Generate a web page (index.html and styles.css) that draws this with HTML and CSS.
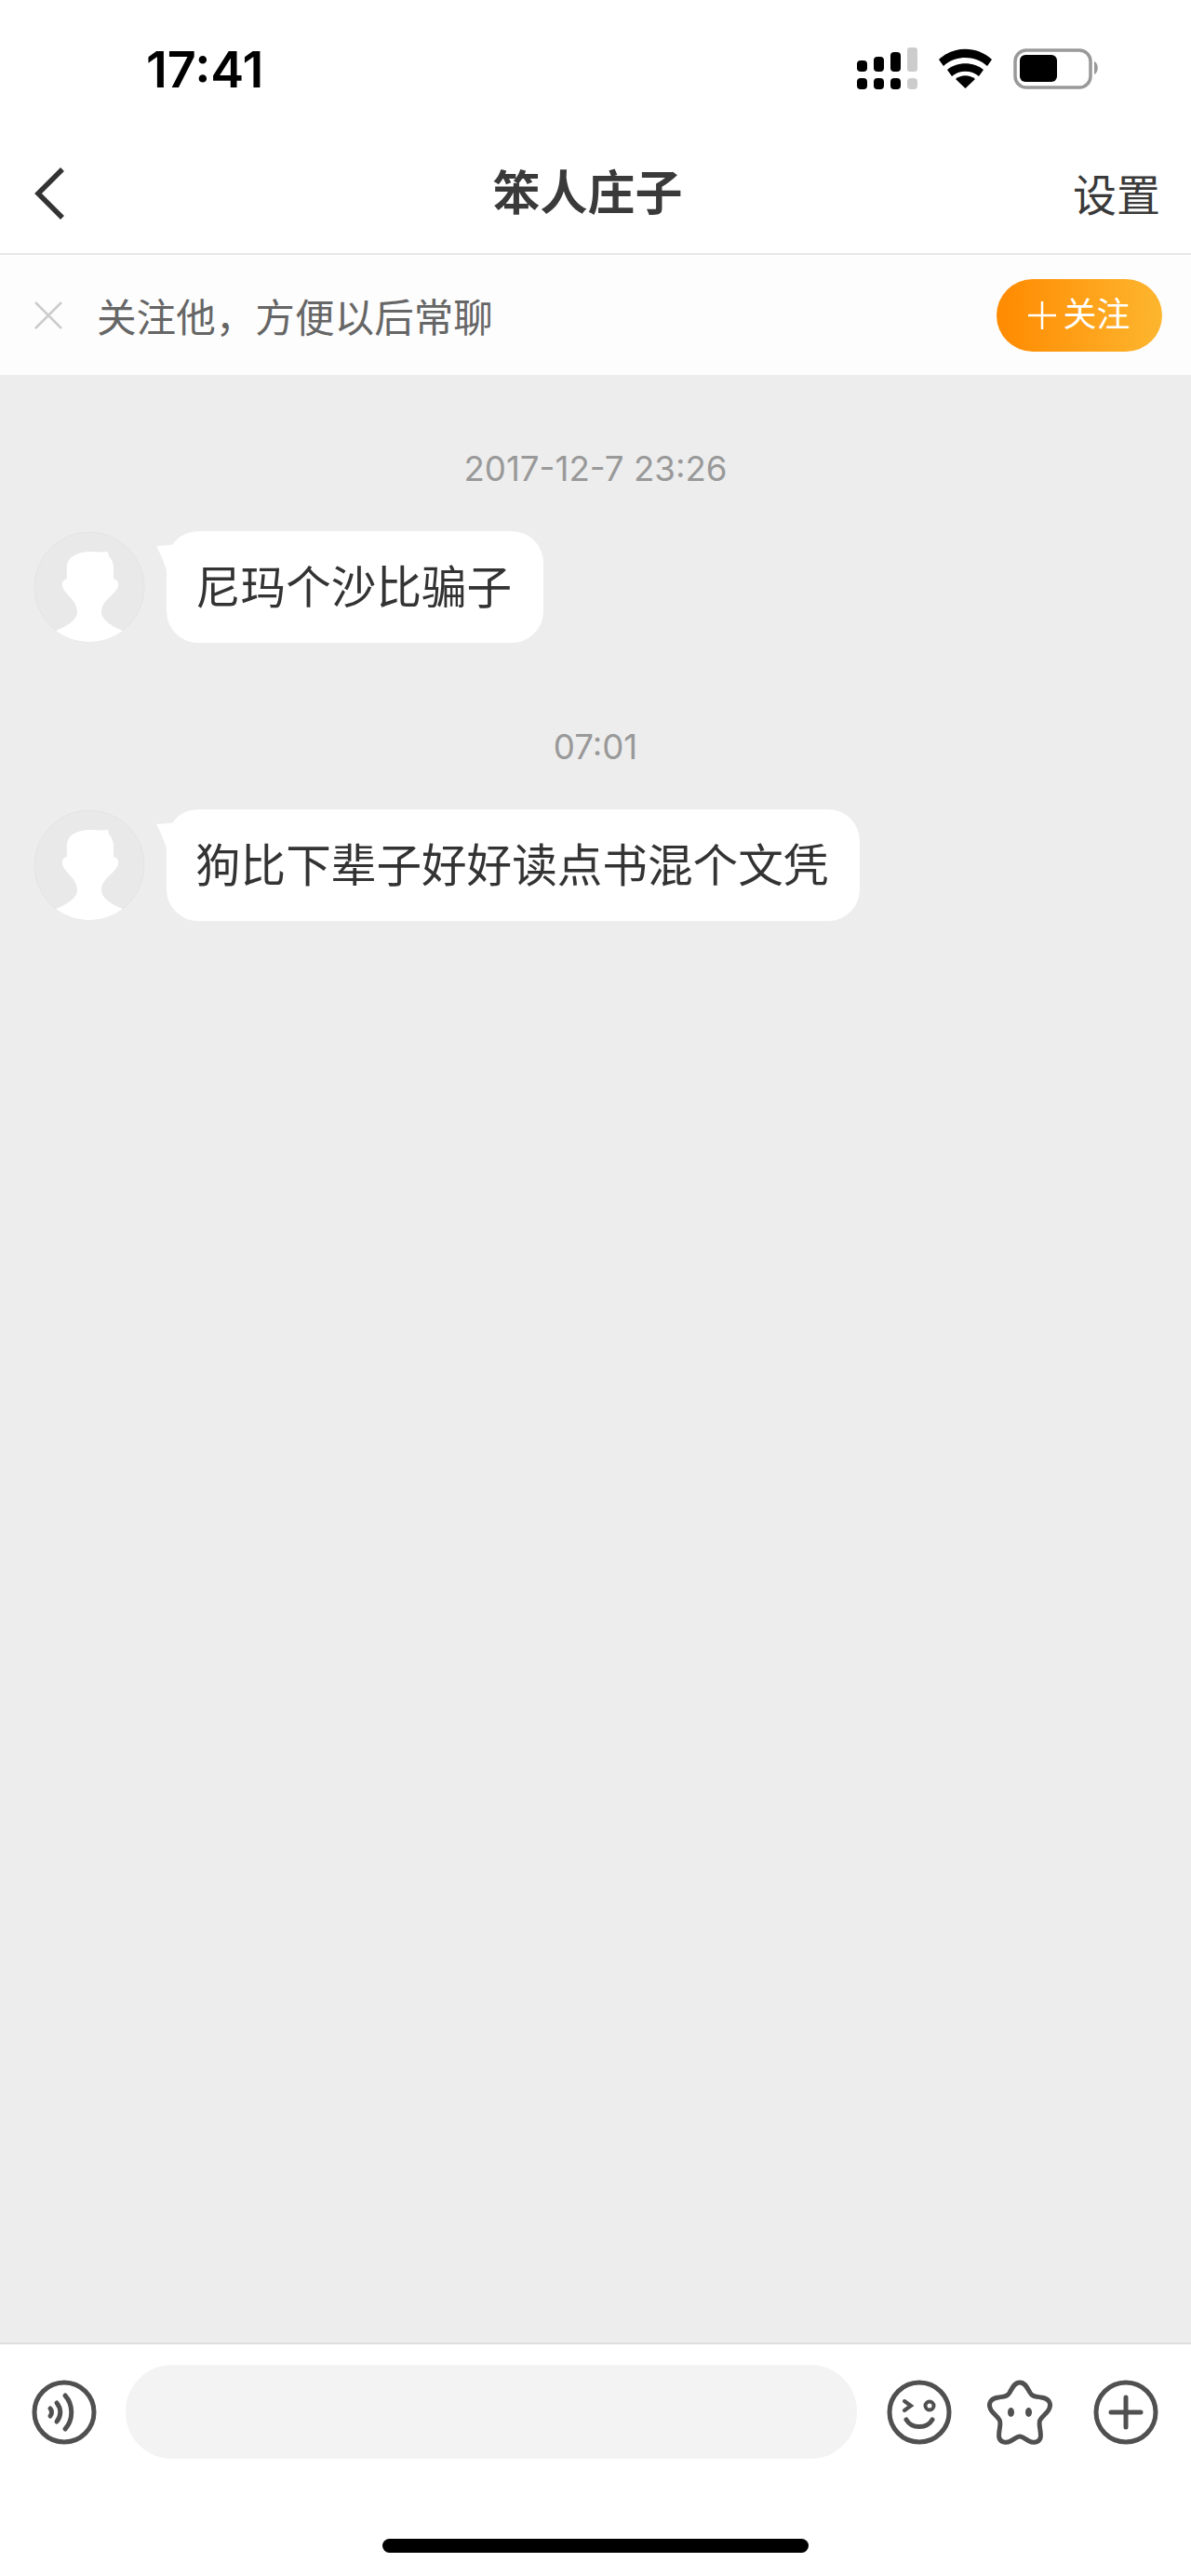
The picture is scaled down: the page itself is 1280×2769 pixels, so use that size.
FILE: index.html
```html
<!DOCTYPE html>
<html lang="zh-CN">
<head>
<meta charset="utf-8">
<title>笨人庄子</title>
<link rel="stylesheet" href="styles.css">
</head>
<body>
<div class="page">
  <header class="status">
    <span class="clock">17:41</span>
    <svg class="status-icons" width="262" height="46" viewBox="0 0 262 46">
      <g fill="#000">
        <rect x="0" y="14" width="11" height="12" rx="4"/><rect x="18" y="10" width="11" height="16" rx="4"/><rect x="36" y="5" width="11" height="21" rx="4"/>
        <rect x="0" y="33" width="11" height="12" rx="4"/><rect x="18" y="33" width="11" height="12" rx="4"/><rect x="36" y="33" width="11" height="12" rx="4"/>
      </g>
      <g fill="#ccc"><rect x="54" y="0" width="11" height="26" rx="3"/><rect x="54" y="33" width="11" height="12" rx="4"/></g>
      <g fill="#000">
        <path d="M88 13 C104 -2 129 -2 145 13 L140 20 C127 8 106 8 93 20Z"/>
        <path d="M97 24 C107 15 126 15 136 24 L131 31 C123 24 110 24 102 31Z"/>
        <path d="M106 34 C112 29 121 29 127 34 L116.500 44Z"/>
      </g>
      <rect x="170" y="3" width="81" height="40" rx="12" fill="none" stroke="#999" stroke-width="3.500"/>
      <rect x="175" y="8" width="40" height="29" rx="6" fill="#000"/>
      <path d="M255 15 C260 17 260 27 255 29Z" fill="#999"/>
    </svg>
  </header>
  <nav class="nav">
    <svg class="back" width="34" height="58" viewBox="0 0 34 58"><path d="M31 3 L5 29 L31 55" fill="none" stroke="#333" stroke-width="5.500"/></svg>
    <h1 class="title">笨人庄子</h1>
    <span class="settings">设置</span>
  </nav>
  <section class="follow">
    <svg class="close" width="30" height="30" viewBox="0 0 30 30"><path d="M1 1 L29 29 M29 1 L1 29" stroke="#ccc" stroke-width="2.500"/></svg>
    <span class="follow-text">关注他，方便以后常聊</span>
    <span class="follow-btn"><svg width="30" height="30" viewBox="0 0 30 30"><path d="M0 15 H30 M15 0 V30" stroke="#fff" stroke-width="2.500"/></svg><span class="follow-label">关注</span></span>
  </section>
  <main class="chat">
    <div class="stamp">2017-12-7 23:26</div>
    <div class="msg">
      <svg class="avatar" width="120" height="120" viewBox="0 0 120 120">
        <circle cx="60" cy="60" r="59" fill="#e9e9e9" stroke="#e4e4e4"/>
        <path d="M60 22 C67 22 74 23 80 22 L81 27 C84 30 86 34 86 40 C86 44 86 48 86 51 C90 52 92 55 91 59 C89 68 73 74 73 87 C73 96 86 103 96 107 A59 59 0 0 1 24 107 C34 103 47 96 47 87 C47 74 33 68 31 59 C30 55 32 52 36 51 C36 45 35 38 37 33 C40 26 50 22 60 22Z" fill="#fff"/>
      </svg>
      <p class="bubble">尼玛个沙比骗子</p>
    </div>
    <div class="stamp stamp-next">07:01</div>
    <div class="msg">
      <svg class="avatar" width="120" height="120" viewBox="0 0 120 120">
        <circle cx="60" cy="60" r="59" fill="#e9e9e9" stroke="#e4e4e4"/>
        <path d="M60 22 C67 22 74 23 80 22 L81 27 C84 30 86 34 86 40 C86 44 86 48 86 51 C90 52 92 55 91 59 C89 68 73 74 73 87 C73 96 86 103 96 107 A59 59 0 0 1 24 107 C34 103 47 96 47 87 C47 74 33 68 31 59 C30 55 32 52 36 51 C36 45 35 38 37 33 C40 26 50 22 60 22Z" fill="#fff"/>
      </svg>
      <p class="bubble">狗比下辈子好好读点书混个文凭</p>
    </div>
  </main>
  <footer class="composer">
    <div class="composer-row">
      <svg class="tool" width="70" height="70" viewBox="0 0 70 70" fill="none" stroke="#505050" stroke-width="5" stroke-linecap="round">
        <circle cx="35" cy="35" r="32"/>
        <path d="M20 31 C22 33 22 37 20 39"/>
        <path d="M27 25 C32 31 32 39 27 45"/>
        <path d="M36 17 C45 27 45 43 36 53"/>
      </svg>
      <div class="input"></div>
      <svg class="tool" width="70" height="70" viewBox="0 0 70 70" fill="none" stroke="#505050" stroke-width="5" stroke-linecap="round">
        <circle cx="35" cy="35" r="32"/>
        <path d="M19 23 L26 28 L19 33" stroke-width="4"/>
        <circle cx="46" cy="28" r="4.500" stroke-width="4"/>
        <path d="M21 43 C27 53 43 53 49 43"/>
      </svg>
      <svg class="tool tool-star" width="70" height="70" viewBox="0 0 70 70" fill="none" stroke="#505050" stroke-width="5" stroke-linejoin="round">
        <path d="M35 3 C41 3 43 9 46 14 C48 18 52 18 58 19 C65 20 69 24 67 30 C66 35 60 38 57 43 C54 47 59 57 57 63 C55 68 49 68 45 66 C41 64 38 61 35 61 C32 61 29 64 25 66 C21 68 15 68 13 63 C11 57 16 47 13 43 C10 38 4 35 3 30 C1 24 5 20 12 19 C18 18 22 18 24 14 C27 9 29 3 35 3Z"/>
        <ellipse cx="25.500" cy="35" rx="3.500" ry="5" fill="#505050" stroke="none"/>
        <ellipse cx="44.500" cy="35" rx="3.500" ry="5" fill="#505050" stroke="none"/>
      </svg>
      <svg class="tool tool-plus" width="70" height="70" viewBox="0 0 70 70" fill="none" stroke="#505050" stroke-width="5" stroke-linecap="round">
        <circle cx="35" cy="35" r="32"/>
        <path d="M19 35 H51 M35 19 V51"/>
      </svg>
    </div>
    <div class="home-bar"></div>
  </footer>
</div>
</body>
</html>
```
FILE: styles.css
```css
* { box-sizing: border-box; }
html, body { margin: 0; padding: 0; }
body {
  background: #fff;
  font-family: "Noto Sans CJK SC", "Noto Sans", sans-serif;
  color: #333;
}
.page {
  width: 1280px;
  height: 2769px;
  display: flex;
  flex-direction: column;
  overflow: hidden;
}
.status {
  height: 146px;
  flex: none;
  display: flex;
  align-items: center;
  justify-content: space-between;
  padding: 4px 97px 0 157px;
  background: #fff;
}
.clock {
  font-family: Inter, "Liberation Sans", sans-serif;
  font-size: 54px;
  font-weight: 600;
  color: #000;
  line-height: 1;
}
.status-icons { display: block; margin-top: -2px; }
.nav {
  height: 128px;
  flex: none;
  display: flex;
  align-items: center;
  justify-content: space-between;
  padding: 0 33px 2px 36px;
  border-bottom: 2px solid #e6e6e6;
}
.back { display: block; }
.title {
  flex: 1;
  margin: 0 0 8px;
  padding-left: 40px;
  text-align: center;
  font-size: 51px;
  font-weight: 700;
  line-height: 60px;
  color: #3a3a3a;
}
.settings { font-size: 47px; line-height: 60px; color: #3a3a3a; margin-bottom: 3px; }
.follow {
  height: 129px;
  flex: none;
  display: flex;
  align-items: center;
  background: #fdfdfd;
  padding: 0 31px 0 37px;
}
.close { display: block; }
.follow-text {
  flex: 1;
  margin-left: 37px;
  font-size: 42.600px;
  color: #666;
  line-height: 60px;
}
.follow-btn {
  width: 178px;
  height: 78px;
  border-radius: 39px;
  background: linear-gradient(90deg, #ff8a00, #fdb62f);
  color: #fff;
  font-size: 36px;
  display: flex;
  align-items: center;
  justify-content: center;
  gap: 7px;
}
.follow-label { line-height: 70px; height: 78px; }
.chat {
  flex: 1;
  background: #ededed;
  padding-top: 76px;
}
.stamp {
  height: 50px;
  line-height: 50px;
  text-align: center;
  font-family: Inter, "Noto Sans", sans-serif;
  font-size: 36.700px;
  color: #999;
  margin-bottom: 42px;
}
.stamp-next { margin-top: 87px; }
.msg {
  display: flex;
  align-items: flex-start;
  padding-left: 36px;
}
.avatar { display: block; flex: none; }
.bubble {
  position: relative;
  margin: 0 0 0 23px;
  height: 120px;
  padding: 0 34px 0 31px;
  background: #fff;
  border-radius: 34px;
  font-size: 48.600px;
  line-height: 115px;
  color: #333;
}
.bubble::before {
  content: "";
  position: absolute;
  left: -11px;
  top: 14px;
  width: 24px;
  height: 28px;
  background: #fff;
  clip-path: polygon(0 2px, 24px 0, 24px 100%, 11px 100%, 6px 50%);
}
.composer {
  flex: none;
  height: 251px;
  border-top: 2px solid #dedede;
  background: #fff;
  display: flex;
  flex-direction: column;
  align-items: center;
}
.composer-row {
  width: 100%;
  height: 101px;
  margin-top: 22px;
  display: flex;
  align-items: center;
  padding: 0 35px 0 34px;
}
.tool { display: block; flex: none; }
.input {
  width: 786px;
  height: 101px;
  margin: 0 32px 0 31px;
  border-radius: 50px;
  background: #f3f3f3;
}
.tool-star { margin-left: 38px; }
.tool-plus { margin-left: 44px; }
.home-bar {
  width: 458px;
  height: 15px;
  margin-top: 86px;
  border-radius: 8px;
  background: #000;
}
```
